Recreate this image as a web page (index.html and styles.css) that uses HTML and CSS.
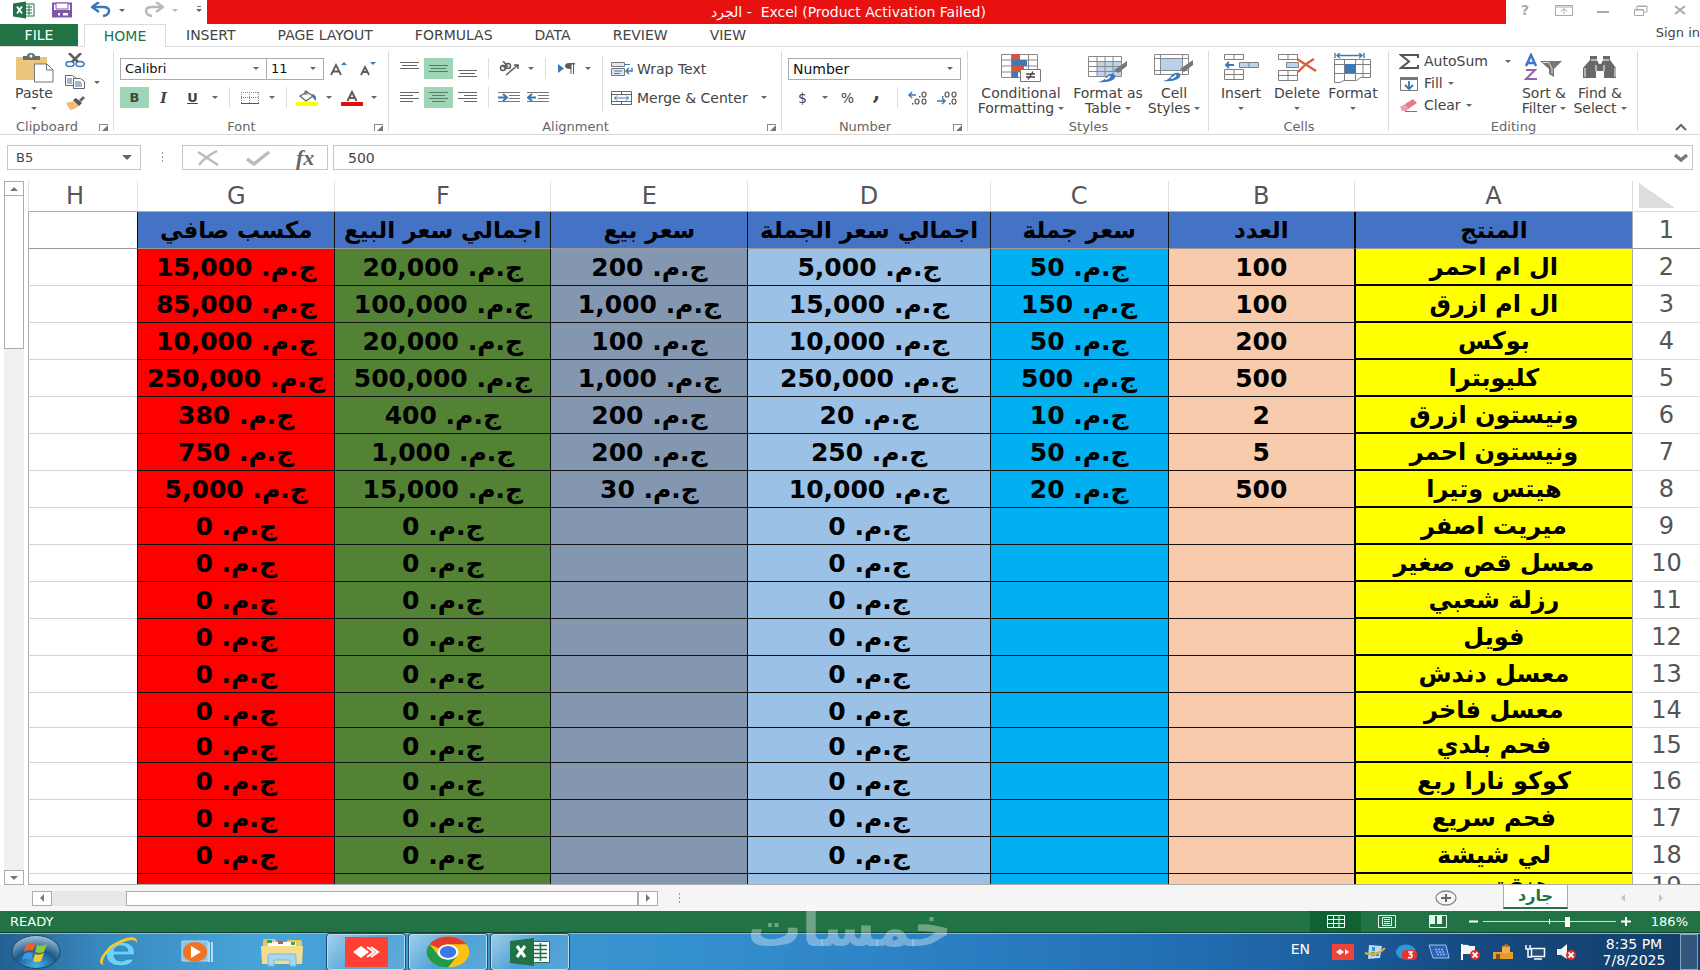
FILE: index.html
```
<!DOCTYPE html>
<html lang="en">
<head>
<meta charset="utf-8">
<title>الجرد - Excel</title>
<link rel="stylesheet" href="styles.css">
</head>
<body>
<header class="titlebar">
  <div class="quick">
    <svg class="qi" width="22" height="18" viewBox="0 0 22 18"><rect x="11" y="3" width="10" height="12" fill="#fff" stroke="#217346"/><path d="M13 6h6M13 9h6M13 12h6M16 4v10" stroke="#217346"/><path d="M0 2.500 13 .5v17L0 15.500z" fill="#217346"/><path d="m4 5.500 5 7M9 5.500l-5 7" stroke="#fff" stroke-width="2"/></svg>
    <button class="qb" aria-label="Save"><svg width="20" height="16" viewBox="0 0 20 16"><path d="M1 1.500h18v13H1z" fill="#fff" stroke="#7e57a8" stroke-width="2"/><path d="M4 1h12v6H4z" fill="#fff" stroke="#7e57a8"/><path d="M1 8h18v7h-3v-4H6v4H1z" fill="#7e57a8"/><path d="M8 11h3v3H8z" fill="#7e57a8"/></svg></button>
    <button class="qb undo" aria-label="Undo"><svg width="20" height="16" viewBox="0 0 20 16"><path d="M3 5h9q6 0 6 4t-6 5" fill="none" stroke="#3b78b8" stroke-width="2.500"/><path d="M8 0 1 5l7 5" fill="none" stroke="#3b78b8" stroke-width="2.500"/></svg></button>
    <button class="caret" aria-label="Undo list"></button>
    <button class="qb redo" aria-label="Redo"><svg width="20" height="16" viewBox="0 0 20 16"><path d="M17 5H8q-6 0-6 4t6 5" fill="none" stroke="#b9b9b9" stroke-width="2.500"/><path d="m12 0 7 5-7 5" fill="none" stroke="#b9b9b9" stroke-width="2.500"/></svg></button>
    <button class="caret faint" aria-label="Redo list"></button>
    <button class="caret bar" aria-label="Customize toolbar"></button>
  </div>
  <div class="title"><span>الجرد -&nbsp; Excel (Product Activation Failed)</span></div>
  <div class="winbtns">
    <button aria-label="Help" class="help">?</button>
    <button aria-label="Ribbon options"><svg width="18" height="11" viewBox="0 0 18 11"><path d="M.5.5h17v10H.5zM0 2h18M9 9V4M6 6.500l3-3 3 3" fill="none" stroke="#aaa"/></svg></button>
    <button aria-label="Minimize"><svg width="12" height="10" viewBox="0 0 12 10"><path d="M0 7h12" stroke="#aaa" stroke-width="2"/></svg></button>
    <button aria-label="Restore"><svg width="14" height="11" viewBox="0 0 14 11"><path d="M.5 4.500h9v6h-9zM3 4V1h10v6h-3M.5 5h9M3 1.500h10" fill="none" stroke="#aaa"/></svg></button>
    <button aria-label="Close"><svg width="12" height="10" viewBox="0 0 12 10"><path d="m1 1 10 8M11 1 1 9" stroke="#aaa" stroke-width="2"/></svg></button>
  </div>
</header>
<nav class="tabs">
  <button class="file">FILE</button>
  <button class="home">HOME</button>
  <button>INSERT</button>
  <button>PAGE LAYOUT</button>
  <button>FORMULAS</button>
  <button>DATA</button>
  <button>REVIEW</button>
  <button>VIEW</button>
  <a class="signin" href="#">Sign in</a>
</nav>
<section class="ribbon">
  <div class="group g-clip">
    <div class="body">
      <button class="big"><svg width="40" height="30" viewBox="0 0 40 30"><path d="M2 4h31v23H2z" fill="#ecc67e"/><path d="M9 7V3h4q0-3 4-3t4 3h5v4z" fill="#6b6b6b"/><circle cx="17" cy="3" r="1.500" fill="#fff"/><path d="M20.500 11H33l6 6v12H20.500z" fill="#fff" stroke="#777"/><path d="M32.500 11v6H39" fill="none" stroke="#777"/></svg><span>Paste</span><i class="car"></i></button>
      <div class="stack">
        <button aria-label="Cut"><svg width="20" height="15" viewBox="0 0 20 15"><path d="m4 0 9 9M16 0 7 9" stroke="#5c5c5c" stroke-width="2.500"/><ellipse cx="5" cy="11" rx="4" ry="2.500" fill="none" stroke="#3b78b8" stroke-width="1.500"/><ellipse cx="15" cy="11" rx="4" ry="2.500" fill="none" stroke="#3b78b8" stroke-width="1.500"/></svg></button>
        <button aria-label="Copy"><svg width="20" height="14" viewBox="0 0 20 14"><path d="M.5.500h7l3 2v8H.5z" fill="#fff" stroke="#666"/><path d="M2 4h5M2 6h5M2 8h5" stroke="#3b78b8"/><path d="M8.500 3.500h7l4 3v7h-11z" fill="#fff" stroke="#666"/><path d="M10 7h6M10 9h7M10 11h7" stroke="#3b78b8"/></svg></button>
        <button aria-label="Format painter"><svg width="20" height="14" viewBox="0 0 20 14"><path d="m1 7 8-2 5 5-5 3-4 1z" fill="#ecbc78"/><path d="m8 4 3-2 6 5-3 3z" fill="#555"/><path d="m14 4 4-4 2 2-4 4z" fill="#666"/></svg></button>
      </div>
      <button class="caret copyc" aria-label="Copy options"></button>
    </div>
    <div class="label has-launch"><span>Clipboard</span><i class="launch"></i></div>
  </div>
  <div class="group g-font">
    <div class="body rows">
      <div class="row">
        <label class="pick p-font"><select aria-label="Font"><option>Calibri</option></select></label>
        <label class="pick p-size"><select aria-label="Font size"><option>11</option></select></label>
        <button class="t" aria-label="Grow font"><svg width="18" height="14" viewBox="0 0 18 14"><path d="m1 13 5-10 5 10M3 9.500h6" fill="none" stroke="#5c5c5c" stroke-width="1.800"/><path d="m11 3 3-3 3 3z" fill="#3b78b8"/></svg></button>
        <button class="t" aria-label="Shrink font"><svg width="18" height="14" viewBox="0 0 18 14"><path d="m2 13 4-8 4 8M4 10h5" fill="none" stroke="#5c5c5c" stroke-width="1.800"/><path d="m11 0 3 3 3-3z" fill="#3b78b8"/></svg></button>
      </div>
      <div class="row">
        <button class="t on"><b>B</b></button><button class="t it">I</button><button class="t un">U</button><button class="caret" aria-label="Underline options"></button><i class="sep"></i>
        <button class="t" aria-label="Borders"><svg width="18" height="12" viewBox="0 0 18 12"><path d="M0 .5h18M0 5.500h18M.5 0v12M8.500 0v12M17.500 0v12" stroke="#888" stroke-dasharray="1 1"/><path d="M0 11.500h18" stroke="#555"/></svg></button><button class="caret" aria-label="Border options"></button><i class="sep"></i>
        <button class="t" aria-label="Fill color"><svg width="22" height="16" viewBox="0 0 22 16"><path d="M0 12h22v4H0z" fill="#ff0"/><path d="m4 6 7-4 6 4-7 5z" fill="#fff" stroke="#666" stroke-width="1.300"/><path d="M9 5V1h2v4" fill="none" stroke="#666"/><path d="M16 4q5 1 4 7l-3-3z" fill="#3b78b8"/></svg></button><button class="caret" aria-label="Fill options"></button>
        <button class="t" aria-label="Font color"><svg width="22" height="16" viewBox="0 0 22 16"><path d="M0 12h22v4H0z" fill="#e60f0f"/><path d="m6.500 11 4.500-9 4.500 9M8 8h6" fill="none" stroke="#5c5c5c" stroke-width="2"/></svg></button><button class="caret" aria-label="Font color options"></button>
      </div>
    </div>
    <div class="label has-launch"><span>Font</span><i class="launch"></i></div>
  </div>
  <div class="group g-align">
    <div class="body">
      <div class="rows a-left">
        <div class="row">
          <button class="t" aria-label="Top align"><svg width="19" height="16" viewBox="0 0 19 16"><path d="M0 1.500h19M2 4.500h15M0 7.500h19" stroke="#666"/></svg></button>
          <button class="t on" aria-label="Middle align"><svg width="19" height="16" viewBox="0 0 19 16"><path d="M0 4.500h19M2 7.500h15M0 10.500h19" stroke="#5b7a69"/></svg></button>
          <button class="t" aria-label="Bottom align"><svg width="19" height="16" viewBox="0 0 19 16"><path d="M0 9.500h19M2 12.500h15M0 15.500h19" stroke="#666"/></svg></button><i class="sep"></i>
          <button class="t" aria-label="Orientation"><svg width="22" height="16" viewBox="0 0 22 16"><g fill="none" stroke="#5c5c5c" stroke-width="1.500"><circle cx="5" cy="7" r="2.500"/><path d="m4 4 4 4"/><circle cx="10" cy="5" r="2.500"/><path d="m5 0 5 6M8 14 20 4M16 4h4v4"/></g></svg></button><button class="caret" aria-label="Orientation options"></button><i class="sep"></i>
          <button class="t" aria-label="Text direction"><svg width="18" height="12" viewBox="0 0 18 12"><path d="m1 1 6 4.500L1 10z" fill="#3b78b8"/><path d="M12 0h6v1.500h-1V11h-1V1.500h-1.500V11h-1V6Q8 6 8 3t4-3z" fill="#5c5c5c"/></svg></button><button class="caret" aria-label="Direction options"></button>
        </div>
        <div class="row">
          <button class="t" aria-label="Align left"><svg width="19" height="12" viewBox="0 0 19 12"><path d="M0 .5h19M0 3.500h13M0 6.500h19M0 9.500h13" stroke="#666"/></svg></button>
          <button class="t on" aria-label="Center"><svg width="19" height="12" viewBox="0 0 19 12"><path d="M0 .5h19M3 3.500h13M0 6.500h19M3 9.500h13" stroke="#5b7a69"/></svg></button>
          <button class="t" aria-label="Align right"><svg width="19" height="12" viewBox="0 0 19 12"><path d="M0 .5h19M6 3.500h13M0 6.500h19M6 9.500h13" stroke="#666"/></svg></button><i class="sep"></i>
          <button class="t" aria-label="Decrease indent"><svg width="22" height="12" viewBox="0 0 22 12"><path d="M0 .5h22M11 3.500h11M11 6.500h11M0 9.500h22" stroke="#777"/><path d="M0 5.500h8M5 2l4 3.500L5 9" fill="none" stroke="#3b78b8" stroke-width="2"/></svg></button>
          <button class="t" aria-label="Increase indent"><svg width="22" height="12" viewBox="0 0 22 12"><path d="M0 .5h22M11 3.500h11M11 6.500h11M0 9.500h22" stroke="#777"/><path d="M1 5.500h8M5 2 1 5.500 5 9" fill="none" stroke="#3b78b8" stroke-width="2"/></svg></button>
        </div>
      </div>
      <i class="sep tall"></i>
      <div class="rows">
        <button class="wide"><svg width="22" height="16" viewBox="0 0 22 16"><path d="M.5 1.500h13v4H.5zM.5 7.500h13v7H.5z" fill="#dfe7f0" stroke="#777"/><path d="M3 10h8M3 12.500h6M13 3.500h6" stroke="#3b78b8"/><path d="M21 7v3h-6M18 7l-3 3 3 3" fill="none" stroke="#3b78b8" stroke-width="1.500"/></svg>Wrap Text</button>
        <div class="row"><button class="wide"><svg width="22" height="16" viewBox="0 0 22 16"><path d="M.5 1.500h20v13H.5zM.5 4.500h20M.5 11.500h20M10.500 1v3M10.500 12v3" fill="none" stroke="#666"/><path d="M3 8h15M6 5.500 3.500 8 6 10.500M15 5.500 17.500 8 15 10.500" fill="none" stroke="#3b78b8"/></svg>Merge &amp; Center</button><button class="caret" aria-label="Merge options"></button></div>
      </div>
    </div>
    <div class="label has-launch"><span>Alignment</span><i class="launch"></i></div>
  </div>
  <div class="group g-num">
    <div class="body rows">
      <div class="row"><label class="pick p-num"><select aria-label="Number format"><option>Number</option></select></label></div>
      <div class="row">
        <button class="t sym">$</button><button class="caret" aria-label="Currency options"></button><button class="t sym">%</button><button class="t comma" aria-label="Comma style">,</button><i class="sep"></i>
        <button class="t dec" aria-label="Increase decimal"><svg width="20" height="14" viewBox="0 0 20 14"><path d="M1 4h7M4 1 1 4l3 3" fill="none" stroke="#3b78b8" stroke-width="1.500"/><g fill="none" stroke="#555" stroke-width="1.200"><ellipse cx="16" cy="3.500" rx="2" ry="2.500"/><ellipse cx="9" cy="10.500" rx="2" ry="2.500"/><ellipse cx="16" cy="10.500" rx="2" ry="2.500"/></g><path d="M11 5h1.500v1.500H11zM4 12h1.500v1.500H4z" fill="#555"/></svg></button>
        <button class="t dec" aria-label="Decrease decimal"><svg width="20" height="14" viewBox="0 0 20 14"><path d="M0 10h8M5 7l3 3-3 3" fill="none" stroke="#3b78b8" stroke-width="1.500"/><g fill="none" stroke="#555" stroke-width="1.200"><ellipse cx="10" cy="3.500" rx="2" ry="2.500"/><ellipse cx="17" cy="3.500" rx="2" ry="2.500"/><ellipse cx="17" cy="10.500" rx="2" ry="2.500"/></g><path d="M5 5h1.500v1.500H5zM12 12h1.500v1.500H12z" fill="#555"/></svg></button>
      </div>
    </div>
    <div class="label has-launch"><span>Number</span><i class="launch"></i></div>
  </div>
  <div class="group g-styles">
    <div class="body center">
      <button class="big b-cond"><svg width="40" height="30" viewBox="0 0 40 30"><path d="M.5 1.500h36v23H.5zM.5 7h36M.5 13h36M.5 19h36M10.500 1v24M27.500 1v24" fill="#fff" stroke="#888"/><path d="M11 1h8v6h-8zM11 13h12v6H11z" fill="#d0583c"/><path d="M11 7h15v6H11zM11 19h6v6h-6z" fill="#4178b5"/><path d="M19.500 16.500h20v12h-20z" fill="#fff" stroke="#777"/><path d="M25 21h9M25 24h9M32 18.500l-5 8" stroke="#444" stroke-width="1.400"/></svg><span>Conditional</span><span>Formatting<i class="car in"></i></span></button>
      <button class="big b-tab"><svg width="40" height="30" viewBox="0 0 40 30"><path d="M9 9h24v15H9z" fill="#bcd3ea"/><path d="M.5 3.500h33v20H.5zM.5 8.500h33M.5 13.500h33M.5 18.500h33M9 3v21M17 3v21M25 3v21" fill="none" stroke="#888"/><path d="m39 8v5l-9 7-4-3z" fill="#777"/><path d="M10 29q6-1 8-5 3-4 8-3 3 3-1 6-6 3-15 2z" fill="#4078b8"/><path d="M17 26q3 0 5-3" stroke="#fff" fill="none" stroke-width="1.500"/></svg><span>Format as</span><span>Table<i class="car in"></i></span></button>
      <button class="big b-cell"><svg width="40" height="30" viewBox="0 0 40 30"><path d="M.5 1.500h34v20H.5z" fill="#fff" stroke="#888"/><path d="M7 6h21v11H7z" fill="#b9d1ea"/><path d="M.5 5.500h34M.5 17.500h34M6.500 1v21M28.500 1v21" stroke="#888"/><path d="m39 7v5l-9 7-4-3z" fill="#777"/><path d="M9 28q6-1 8-5 3-4 8-3 3 3-1 6-6 3-15 2z" fill="#4078b8"/><path d="M17 25q3 0 5-3" stroke="#fff" fill="none" stroke-width="1.500"/></svg><span>Cell</span><span>Styles<i class="car in"></i></span></button>
    </div>
    <div class="label"><span>Styles</span></div>
  </div>
  <div class="group g-cells">
    <div class="body center">
      <button class="big b-c"><svg width="36" height="30" viewBox="0 0 36 30"><path d="M1.500 1.500h19v5h-19zM11 1v6M1.500 16.500h19v10h-19zM1.500 21.500h19M11 16v11" fill="none" stroke="#808080"/><path d="M16.500 9.500h19v5h-19z" fill="#b9d6ee" stroke="#808080"/><path d="M26 9v6" stroke="#808080"/><path d="M3 12h8M6 9l-3 3 3 3" fill="none" stroke="#3b78b8" stroke-width="1.800"/></svg><span>Insert</span><i class="car"></i></button>
      <button class="big b-c"><svg width="40" height="30" viewBox="0 0 40 30"><path d="M1.500 1.500h19v5h-19zM11 1v6M1.500 17.500h19v10h-19zM1.500 22.500h19M11 17v11" fill="none" stroke="#808080"/><path d="M9.500 9.500h12v5h-12z" fill="#b9d6ee" stroke="#808080"/><path d="M20 6q8 5 19 12M37 6q-9 5-16 13" fill="none" stroke="#d9603b" stroke-width="2.500"/></svg><span>Delete</span><i class="car"></i></button>
      <button class="big b-c"><svg width="38" height="30" viewBox="0 0 38 30"><path d="M1 0v5M30 0v5M3 2.500h25M6 0 3 2.500 6 5M25 0l3 2.500L25 5" fill="none" stroke="#3b78b8" stroke-width="1.400"/><path d="M.5 6.500h36v18h-10l-4 3H10l-4 2H.5zM.5 11.500h36M.5 20.500h36M10.500 7v20M21.500 7v20M29 7v17" fill="none" stroke="#808080"/><path d="M11 11h11v9H11z" fill="#3b78b8"/></svg><span>Format</span><i class="car"></i></button>
    </div>
    <div class="label"><span>Cells</span></div>
  </div>
  <div class="group g-edit">
    <div class="body">
      <div class="elist">
        <button><svg width="20" height="15" viewBox="0 0 20 15"><path d="M19 4V1H2l8 6.500L2 14h17v-3" fill="none" stroke="#555" stroke-width="2"/></svg>AutoSum<i class="car far"></i></button>
        <button><svg width="20" height="15" viewBox="0 0 20 15"><path d="M1.500 1.500h17v13h-17z" fill="#fff" stroke="#777"/><path d="M1 1h18v3H1z" fill="#777"/><path d="M10 5v8M6 9l4 4 4-4" fill="none" stroke="#3b78b8" stroke-width="1.800"/></svg>Fill<i class="car in"></i></button>
        <button><svg width="20" height="15" viewBox="0 0 20 15"><path d="m6 6 8-5 4 4-9 6z" fill="#e8798c"/><path d="m1 9 5-3 4 5-3 2H3z" fill="#eda0ad"/><path d="M6 13.500h12" stroke="#777"/></svg>Clear<i class="car in"></i></button>
      </div>
      <button class="big b-sort"><svg width="40" height="30" viewBox="0 0 40 30"><path d="m2 13 5-11 5 11M4 10h7" fill="none" stroke="#3f76c4" stroke-width="2.500"/><path d="M2 17h9L2 26h11" fill="none" stroke="#9a5fb5" stroke-width="2"/><path d="M16 8h22l-8 8v8l-5-3v-5z" fill="#777"/><path d="M19 9.500h6l3 6v5" fill="none" stroke="#ddd"/></svg><span>Sort &amp;</span><span>Filter<i class="car in"></i></span></button>
      <button class="big b-find"><svg width="36" height="30" viewBox="0 0 36 30"><path d="M8 3h7v4l2 4h2l2-4V3h7v4l6 8v10H22v-7h-8v7H1V15l7-8z" fill="#696969"/><path d="M3 15v9M33 15v9M14 12v6M22 12v6M9 7h6M21 7h6" stroke="#fff"/></svg><span>Find &amp;</span><span>Select<i class="car in"></i></span></button>
    </div>
    <div class="label"><span>Editing</span></div>
  </div>
  <button class="collapse" aria-label="Collapse ribbon"><svg width="14" height="8" viewBox="0 0 14 8"><path d="m2 7 5-5 5 5" fill="none" stroke="#666" stroke-width="2"/></svg></button>
</section>
<section class="fbar">
  <label class="pick namebox"><input aria-label="Name box" value="B5"></label>
  <i class="dots"></i>
  <div class="fxbox">
    <button aria-label="Cancel"><svg width="24" height="16" viewBox="0 0 24 16"><path d="m2 2 20 13M21 1Q9 7 3 15" fill="none" stroke="#bcbcbc" stroke-width="2.500"/></svg></button>
    <button aria-label="Enter"><svg width="26" height="16" viewBox="0 0 26 16"><path d="m2 9 7 5L24 2" fill="none" stroke="#bcbcbc" stroke-width="3.500"/></svg></button>
    <button class="fx">fx</button>
  </div>
  <div class="formula"><input aria-label="Formula" value="500"><svg width="16" height="10" viewBox="0 0 16 10"><path d="m2 2 6 5 6-5" fill="none" stroke="#777" stroke-width="3.500"/></svg></div>
</section>
<main class="work">
  <div class="vscroll"><button aria-label="Scroll up"><i class="up"></i></button><div class="vthumb"></div><div class="vtrack"></div><button aria-label="Scroll down"><i class="down"></i></button></div>
  <div class="view">
  <table class="sheet" dir="rtl">
    <colgroup><col class="c-n"><col class="c-a"><col class="c-b"><col class="c-c"><col class="c-d"><col class="c-e"><col class="c-f"><col class="c-e"><col class="c-h"></colgroup>
    <thead><tr><th class="corner"></th><th>A</th><th>B</th><th>C</th><th>D</th><th>E</th><th>F</th><th>G</th><th>H</th></tr></thead>
    <tbody>
      <tr class="heads"><th>1</th><td>المنتج</td><td>العدد</td><td>سعر جملة</td><td>اجمالي سعر الجملة</td><td>سعر بيع</td><td>اجمالي سعر البيع</td><td>مكسب صافي</td><td></td></tr>
      <tr><th>2</th><td>ال ام احمر</td><td>100</td><td>ج.م. 50</td><td>ج.م. 5,000</td><td>ج.م. 200</td><td>ج.م. 20,000</td><td>ج.م. 15,000</td><td></td></tr>
      <tr><th>3</th><td>ال ام ازرق</td><td>100</td><td>ج.م. 150</td><td>ج.م. 15,000</td><td>ج.م. 1,000</td><td>ج.م. 100,000</td><td>ج.م. 85,000</td><td></td></tr>
      <tr><th>4</th><td>بوكس</td><td>200</td><td>ج.م. 50</td><td>ج.م. 10,000</td><td>ج.م. 100</td><td>ج.م. 20,000</td><td>ج.م. 10,000</td><td></td></tr>
      <tr><th>5</th><td>كليوبترا</td><td>500</td><td>ج.م. 500</td><td>ج.م. 250,000</td><td>ج.م. 1,000</td><td>ج.م. 500,000</td><td>ج.م. 250,000</td><td></td></tr>
      <tr><th>6</th><td>ونيستون ازرق</td><td>2</td><td>ج.م. 10</td><td>ج.م. 20</td><td>ج.م. 200</td><td>ج.م. 400</td><td>ج.م. 380</td><td></td></tr>
      <tr><th>7</th><td>ونيستون احمر</td><td>5</td><td>ج.م. 50</td><td>ج.م. 250</td><td>ج.م. 200</td><td>ج.م. 1,000</td><td>ج.م. 750</td><td></td></tr>
      <tr><th>8</th><td>هيتس وتيرا</td><td>500</td><td>ج.م. 20</td><td>ج.م. 10,000</td><td>ج.م. 30</td><td>ج.م. 15,000</td><td>ج.م. 5,000</td><td></td></tr>
      <tr><th>9</th><td>ميريت اصفر</td><td></td><td></td><td>ج.م. 0</td><td></td><td>ج.م. 0</td><td>ج.م. 0</td><td></td></tr>
      <tr><th>10</th><td>معسل قص صغير</td><td></td><td></td><td>ج.م. 0</td><td></td><td>ج.م. 0</td><td>ج.م. 0</td><td></td></tr>
      <tr><th>11</th><td>رزلة شعبي</td><td></td><td></td><td>ج.م. 0</td><td></td><td>ج.م. 0</td><td>ج.م. 0</td><td></td></tr>
      <tr><th>12</th><td>فويل</td><td></td><td></td><td>ج.م. 0</td><td></td><td>ج.م. 0</td><td>ج.م. 0</td><td></td></tr>
      <tr><th>13</th><td>معسل دندش</td><td></td><td></td><td>ج.م. 0</td><td></td><td>ج.م. 0</td><td>ج.م. 0</td><td></td></tr>
      <tr class="short"><th>14</th><td>معسل فاخر</td><td></td><td></td><td>ج.م. 0</td><td></td><td>ج.م. 0</td><td>ج.م. 0</td><td></td></tr>
      <tr class="short"><th>15</th><td>فحم بلدي</td><td></td><td></td><td>ج.م. 0</td><td></td><td>ج.م. 0</td><td>ج.م. 0</td><td></td></tr>
      <tr><th>16</th><td>كوكو نارا ربع</td><td></td><td></td><td>ج.م. 0</td><td></td><td>ج.م. 0</td><td>ج.م. 0</td><td></td></tr>
      <tr><th>17</th><td>فحم سريع</td><td></td><td></td><td>ج.م. 0</td><td></td><td>ج.م. 0</td><td>ج.م. 0</td><td></td></tr>
      <tr><th>18</th><td>لي شيشة</td><td></td><td></td><td>ج.م. 0</td><td></td><td>ج.م. 0</td><td>ج.م. 0</td><td></td></tr>
      <tr class="part"><th>19</th><td>هنقة ست</td><td></td><td></td><td></td><td></td><td></td><td></td><td></td></tr>
    </tbody>
  </table>
  </div>
</main>
<section class="sheetbar">
  <button class="hb" aria-label="Scroll left"><i class="left"></i></button><div class="htrack"></div><div class="hthumb"></div><button class="hb" aria-label="Scroll right"><i class="right"></i></button>
  <i class="dots sm"></i>
  <button class="add" aria-label="New sheet"><svg width="22" height="16" viewBox="0 0 22 16"><ellipse cx="11" cy="8" rx="10" ry="7" fill="none" stroke="#888" stroke-width="1.300"/><path d="M6 8h10M11 4v8" stroke="#666" stroke-width="2"/></svg></button>
  <button class="stab">جارد</button>
  <button class="nav n1" aria-label="Previous sheet"><i class="left"></i></button><button class="nav" aria-label="Next sheet"><i class="right"></i></button>
</section>
<footer class="status">
  <span class="ready">READY</span>
  <button class="v act" aria-label="Normal view"><svg width="18" height="13" viewBox="0 0 18 13"><path d="M.5.500h17v12H.5zM.5 4.500h17M.5 8.500h17M6.500 0v13M12 0v13" fill="none" stroke="#fff"/></svg></button>
  <button class="v" aria-label="Page layout view"><svg width="18" height="13" viewBox="0 0 18 13"><path d="M.5.500h17v12H.5zM4.500 2.500h9v8h-9zM6 4.500h6M6 6.500h6M6 8.500h6" fill="none" stroke="#e8f2ec"/></svg></button>
  <button class="v" aria-label="Page break view"><svg width="18" height="13" viewBox="0 0 18 13"><path d="M.5.500h17v12H.5z" fill="none" stroke="#e8f2ec"/><path d="M1 1h5v8H1zM8 1h5v8H8z" fill="#e8f2ec"/></svg></button>
  <button class="z" aria-label="Zoom out"><svg width="9" height="9" viewBox="0 0 9 9"><path d="M0 4.500h9" stroke="#fff" stroke-width="2"/></svg></button>
  <input type="range" min="0" max="100" value="64" aria-label="Zoom">
  <button class="z" aria-label="Zoom in"><svg width="10" height="9" viewBox="0 0 10 9"><path d="M0 4.500h10M5 0v9" stroke="#fff" stroke-width="2"/></svg></button>
  <span class="pct">186%</span>
</footer>
<footer class="taskbar">
  <button class="tb orb" aria-label="Start"><svg width="50" height="36" viewBox="0 0 50 36"><defs><radialGradient id="orb" cx=".5" cy=".9" r=".9"><stop offset="0" stop-color="#3fb4e8"/><stop offset=".5" stop-color="#1c5a8c"/><stop offset="1" stop-color="#a9c3d6"/></radialGradient></defs><ellipse cx="25" cy="18" rx="24" ry="16.500" fill="url(#orb)" stroke="#1d4668"/><path d="M15 11q5-3 9-1l-2 7q-4-2-9 1z" fill="#e8622b"/><path d="M26 11q4 2 10-1l-3 8q-5 2-9 0z" fill="#8dc63f"/><path d="M13 20q4-3 9-1l-2 7q-4-3-9 0z" fill="#3c9be0"/><path d="M24 20q4 2 9-1l-3 8q-4 2-8 0z" fill="#fdc72f"/></svg></button>
  <button class="tb" aria-label="Internet Explorer"><svg width="42" height="32" viewBox="0 0 42 32"><path d="M8 17Q9 6 23 6t14 13H16q1 6 7 6 4 0 6-2h7q-3 7-13 7Q8 30 8 17zM16 15h14q-1-5-7-5t-7 5z" fill="#6fd0f6" stroke="#2287c0" fill-rule="evenodd"/><path d="M6 29Q-2 28 6 17 14 6 28 2q12-3 11 5-2-5-10-2Q14 9 7 20q-4 7-1 9z" fill="#f6c928"/></svg></button>
  <button class="tb" aria-label="Media Player"><svg width="36" height="26" viewBox="0 0 36 26"><path d="M1 2h26v20H1z" fill="#8fc0e2" stroke="#b5daf0"/><path d="M28 3v20M31 3v20" stroke="#b5daf0" stroke-width="2"/><ellipse cx="14" cy="13" rx="12" ry="10" fill="#ee7420"/><path d="m10 7 10 6-10 6z" fill="#fff"/></svg></button>
  <button class="tb" aria-label="Explorer"><svg width="44" height="30" viewBox="0 0 44 30"><path d="M3 4q0-2 2-2h10l2 3h9l2-2h12q2 0 2 2v20H3z" fill="#e9c766"/><path d="M8 5h28v6H8z" fill="#fff"/><path d="M7 3h5v3H7zM31 5h4v3h-4z" fill="#3aa655"/><path d="M18 4h5v3h-5z" fill="#d9503a"/><path d="M1 9h42l-1 18H2z" fill="#f6dd8d"/><path d="M8 29V19q0-2 2-2h24q2 0 2 2v10h-6v-6H14v6z" fill="#a8d8f0" stroke="#78b5dc"/></svg></button>
  <button class="tb run" aria-label="AnyDesk"><svg width="43" height="30" viewBox="0 0 43 30"><path d="M0 0h43v30H0z" fill="#ff4035"/><path d="m8 15 8-6 8 6-8 6z" fill="#fff"/><path d="m22 10 7 5-7 5M26 10l7 5-7 5" fill="none" stroke="#fff" stroke-width="2"/></svg></button>
  <button class="tb run" aria-label="Chrome"><svg width="44" height="32" viewBox="0 0 32 32" preserveAspectRatio="none"><circle cx="16" cy="16" r="15.500" fill="#fbc116"/><path d="M2.600 8.200A15.500 15.500 0 0 1 29.400 8.200H16a7.800 7.800 0 0 0-6.800 4z" fill="#e33b2e"/><path d="M2.600 8.200A15.500 15.500 0 0 0 16 31.500l6.700-11.600a7.800 7.800 0 0 1-13.400 0z" fill="#229a4b"/><circle cx="16" cy="16" r="7.600" fill="#fff"/><circle cx="16" cy="16" r="6" fill="#3b78e7"/></svg></button>
  <button class="tb run" aria-label="Excel"><svg width="42" height="28" viewBox="0 0 42 28"><path d="M22.500 3.500h18v21h-18z" fill="#fff" stroke="#217346"/><path d="M25 7.500h13M25 11.500h13M25 15.500h13M25 19.500h13M31.500 5v18" stroke="#217346" stroke-width="1.500"/><path d="M1 3 25 0v28L1 25z" fill="#217346"/><path d="m8 8 8 11M16 8 8 19" stroke="#fff" stroke-width="3"/></svg></button>
  <div class="tray">
    <span class="lang">EN</span>
    <svg width="22" height="16" viewBox="0 0 22 16"><path d="M0 0h22v16H0z" fill="#f04438"/><path d="m4 8 4-3 4 3-4 3zM13 5l4 3-4 3" fill="#fff"/></svg>
    <svg width="22" height="16" viewBox="0 0 22 16"><path d="m5 1 13 1-2 12-12 1z" fill="#b8dcf4"/><path d="m8 3 3 0v4H8zM12 8h3v4h-3z" fill="#3f8fd0"/><path d="M7 8h4v4H7z" fill="#69b34c"/><path d="M1 9Q12 13 21 4" fill="none" stroke="#e8a93a" stroke-width="2"/></svg>
    <svg width="22" height="16" viewBox="0 0 22 16"><ellipse cx="10" cy="8" rx="10" ry="7.500" fill="#2d9ad8"/><rect x="6" y="6" width="15" height="10" rx="4" fill="#e5322e"/><path d="M12 8h4l-2 2.500q3 0 2 2t-4 1" fill="none" stroke="#fff" stroke-width="1.500"/></svg>
    <svg width="22" height="16" viewBox="0 0 22 16"><path d="M1 1h17l3 13H5z" fill="#2b63b8" stroke="#9cc3ea"/><path d="M7 5.500h8M8 8h8M9 10.500h8" stroke="#8ab6e4" stroke-width="1.300" stroke-dasharray="2 1"/></svg>
    <svg width="22" height="16" viewBox="0 0 22 16"><path d="M2 0v16" stroke="#fff" stroke-width="2"/><path d="M3 1q4-1 7 1h5v8H3z" fill="#f4f4f4"/><circle cx="15" cy="11" r="5" fill="#dd2e2e"/><path d="m12.500 8.500 5 5M17.500 8.500l-5 5" stroke="#fff" stroke-width="1.800"/></svg>
    <svg width="22" height="16" viewBox="0 0 22 16"><path d="M1 8h20v7H1z" fill="#e59a2e"/><path d="M10 2h8v7h-8z" fill="#f0b14a"/><path d="m9 3 5-3 5 3z" fill="#c9751b"/><path d="M4 10h4v5H4z" fill="#8a4d12"/></svg>
    <svg width="22" height="16" viewBox="0 0 22 16"><path d="M7.500 4.500h13v8h-13z" fill="#23507e" stroke="#fff" stroke-width="1.500"/><path d="M10 15h8M2 1v4h4V1M4 5v8h4" fill="none" stroke="#fff" stroke-width="1.500"/></svg>
    <svg width="22" height="16" viewBox="0 0 22 16"><path d="M1 5h4l6-5v15l-6-4H1z" fill="#f4f4f4"/><circle cx="15" cy="11" r="5" fill="#dd2e2e"/><path d="m12.500 8.500 5 5M17.500 8.500l-5 5" stroke="#fff" stroke-width="1.800"/></svg>
    <div class="clock"><span>8:35 PM</span><span>7/8/2025</span></div>
    <button class="peek" aria-label="Show desktop"></button>
  </div>
</footer>
<div class="mark" dir="rtl">خمسات</div>
</body>
</html>
```

FILE: styles.css
```
* { box-sizing: border-box; }
body { margin: 0; height: 100vh; display: flex; flex-direction: column; overflow: hidden; background: #fff; color: #444; font: 14px/16px "DejaVu Sans", sans-serif; position: relative; }
button, input, select { font: inherit; color: inherit; background: none; border: 0; padding: 0; margin: 0; border-radius: 0; outline: 0; }
button { display: flex; align-items: center; justify-content: center; white-space: nowrap; }
svg { display: block; flex: none; }
i { font-style: normal; flex: none; }

.titlebar { display: flex; height: 24px; flex: none; }
.quick { display: flex; align-items: center; width: 207px; flex: none; padding: 0 0 4px 13px; }
.qi { margin-right: 12px; }
.qb { width: 30px; flex: none; }
.undo { margin-left: 9px; }
.redo { margin-left: 11px; }
.quick .caret { width: 12px; }
.quick .bar { margin-left: 12px; }
.title { flex: 1; background: #e91010; color: #fff; text-align: center; padding-right: 16px; line-height: 24px; }
.winbtns { display: flex; width: 194px; flex: none; justify-content: space-between; padding: 0 10px 4px 9px; }
.winbtns button { width: 20px; }
.help { font-weight: bold; color: #aaa; }

.caret { width: 16px; height: 21px; flex: none; }
.caret::before, .car, .pick::after { content: ""; width: 0; height: 0; border: 3px solid transparent; border-top-color: #666; border-bottom-width: 0; display: block; }
.faint::before { border-top-color: #bbb; }
.bar::before { box-shadow: 0 -4px 0 -1px #777; }

.tabs { display: flex; height: 23px; flex: none; border-bottom: 1px solid #dcdcdc; align-items: stretch; }
.tabs button { margin-right: 42px; }
.tabs .file { width: 78px; background: #217346; color: #fff; margin-right: 6px; }
.tabs .home { width: 82px; color: #217346; border: 1px solid #dcdcdc; border-bottom: 0; background: #fff; margin: 0 20px 0 0; height: 23px; }
.signin { margin-left: auto; color: #444; text-decoration: none; font-size: 13px; line-height: 18px; }

.ribbon { display: flex; height: 88px; flex: none; border-bottom: 1px solid #d8d8d8; padding-top: 4px; }
.group { display: flex; flex-direction: column; flex: none; background: linear-gradient(#dcdcdc, #dcdcdc) 100% 0 / 1px 80px no-repeat; }
.g-clip { width: 114px; } .g-font { width: 275px; } .g-align { width: 393px; } .g-num { width: 186px; } .g-styles { width: 241px; } .g-cells { width: 180px; } .g-edit { width: 249px; }
.body { height: 68px; flex: none; display: flex; padding: 2px 6px 0; align-items: flex-start; }
.rows { display: flex; flex-direction: column; gap: 8px; padding-top: 7px; }
.body .rows { padding-top: 5px; }
.row { display: flex; height: 21px; align-items: center; }
.label { height: 15px; line-height: 15px; display: flex; justify-content: center; position: relative; color: #666; font-size: 13px; }
.has-launch { padding-right: 20px; }
.launch { position: absolute; right: 6px; top: 5px; width: 9px; height: 7px; border-left: 1px solid #888; border-top: 1px solid #888; }
.launch::after { content: ""; position: absolute; right: 0; bottom: 0; border: 3px solid transparent; border-right-color: #777; border-bottom-color: #777; }
.t { width: 29px; height: 21px; flex: none; }
.on { background: #9fd5b7; }
.t b { font-size: 13px; }
.it { font: italic bold 14px "DejaVu Serif", serif; }
.un { font-weight: bold; font-size: 13px; text-decoration: underline; }
.comma { font: bold 22px/10px "DejaVu Serif", serif; padding-bottom: 12px; }
.sep { width: 12px; height: 21px; background: linear-gradient(#dcdcdc, #dcdcdc) 50% 0 / 1px 100% no-repeat; }
.tall { height: 55px; margin-top: 3px; }
.pick { display: flex; align-items: center; border: 1px solid #ababab; height: 22px; color: #111; padding: 0 7px 0 4px; background: #fff; }
.pick select, .pick input { flex: 1; min-width: 0; width: 100%; appearance: none; height: 18px; }
.p-font { width: 147px; font-size: 13px; } .p-size { width: 58px; margin-left: -1px; font-size: 13px; } .p-num { width: 173px; }
.a-left { width: 201px; }
.wide { gap: 4px; height: 21px; padding-left: 3px; justify-content: flex-start; }
.wide + .caret { margin-left: 8px; }
.big { flex-direction: column; justify-content: flex-start; flex: none; line-height: 15px; }
.big svg { margin-bottom: 3px; }
.big span { display: flex; align-items: center; }
.big > .car { margin-top: 6px; }
.car.in { margin-left: 4px; }
.car.far { margin-left: 12px; }
.g-clip .big { width: 56px; }
.stack { display: flex; flex-direction: column; gap: 7px; padding-left: 3px; }
.copyc { margin-top: 19px; margin-left: 4px; }
.center { padding-left: 4px; }
.g-clip .body { padding-right: 0; }
.b-cond { width: 98px; } .b-tab { width: 76px; } .b-cell { width: 56px; }
.b-c { width: 56px; }
.elist { display: flex; flex-direction: column; gap: 6px; width: 120px; padding-left: 4px; }
.elist button { gap: 5px; justify-content: flex-start; }
.elist .in { margin-left: 0; }
.b-sort { width: 58px; } .b-find { width: 54px; }
.collapse { margin: auto 12px 3px auto; width: 14px; }

.fbar { display: flex; height: 46px; flex: none; padding: 10px 7px 11px; font-size: 13px; }
.namebox { width: 134px; height: 25px; padding: 0 8px; border-color: #c6c6c6; color: #444; }
.namebox::after { border-width: 5px 5px 0; }
.dots { width: 3px; height: 12px; margin: 6px 18px 0 20px; background: radial-gradient(circle, #999 1px, transparent 1px) 0 0 / 3px 4px; }
.fxbox { display: flex; width: 146px; height: 25px; border: 1px solid #c6c6c6; justify-content: space-around; margin-right: 5px; }
.fx { font: italic bold 22px/20px "Liberation Serif", serif; color: #666; }
.formula { flex: 1; display: flex; align-items: center; border: 1px solid #c6c6c6; height: 25px; padding: 0 3px 0 14px; }
.formula input { flex: 1; font-size: 14px; }

.work { flex: 1; min-height: 0; display: flex; }
.vscroll { width: 20px; margin: 0 4px 0 4px; display: flex; flex-direction: column; flex: none; background: #f1f1f1; }
.vscroll button { height: 15px; border: 1px solid #ababab; background: #fff; }
.vthumb { height: 153px; border: 1px solid #ababab; background: #fff; border-top: 0; }
.vtrack { flex: 1; }
.up, .down, .left, .right { width: 0; height: 0; border: 4px solid transparent; }
.up { border-bottom-color: #777; border-top: 0; } .down { border-top-color: #777; border-bottom: 0; }
.left { border-right-color: #777; border-left: 0; } .right { border-left-color: #777; border-right: 0; }
.view { flex: 1; min-width: 0; overflow: hidden; border-bottom: 1px solid #ababab; }
.sheet { width: 100%; table-layout: fixed; border-collapse: separate; border-spacing: 0; color: #000; }
.c-n { width: 68px; } .c-a { width: 278px; } .c-b { width: 186px; } .c-c { width: 178px; } .c-d { width: 242px; } .c-e { width: 197px; } .c-f { width: 216px; } .c-h { width: 109px; }
th { font-weight: normal; font-size: 24px; color: #555; padding: 0; text-align: center; }
thead th { height: 31px; line-height: 30px; border-left: 1px solid #e0e0e0; border-bottom: 1px solid #ababab; }
thead th:last-child { padding-right: 0; padding-right: 16px; }
.sheet .corner { background: linear-gradient(to top right, #ddd 50%, transparent 50%) 6px 2px / 36px 25px no-repeat; border-bottom-color: #ddd; }
tbody tr { height: 37px; }
tbody td { padding: 2px 0 0; text-align: center; font-weight: bold; font-size: 25px; line-height: 34px; white-space: nowrap; border-left: 1px solid #111; border-bottom: 1px solid #111; overflow: hidden; }
tbody th { line-height: 36px; border-left: 1px solid #ababab; border-bottom: 1px solid #ddd; }
td:nth-child(2) { background: #ff0; border-left: 2px solid #000; border-bottom: 2px solid #000; font-size: 24px; line-height: 33px; }
td:nth-child(3) { background: #f8cbad; }
td:nth-child(4) { background: #00b0f0; }
td:nth-child(5) { background: #9bc2e6; }
td:nth-child(6) { background: #8497b0; }
td:nth-child(7) { background: #548235; }
td:nth-child(8) { background: #f00; }
td:nth-child(9) { background: #fff; border-left-color: #ababab; border-bottom-color: #d4d4d4; }
tbody .short { height: 35px; }
.short th { line-height: 33px; }
.short td, .short td:nth-child(2) { line-height: 31px; }
.part th, .part td, .part td:nth-child(2) { line-height: 24px; padding: 0; vertical-align: top; }
.heads td, .heads td:nth-child(2) { background: #4472c4; border-bottom: 1px solid #999; font-size: 23px; }
.heads td { padding: 0; }
.heads td:nth-child(9) { background: #fff; }
.heads th { border-bottom-color: #999; }

.sheetbar { display: flex; height: 26px; flex: none; background: #f5f5f5; padding-left: 32px; align-items: center; }
.hb { width: 20px; height: 15px; border: 1px solid #ababab; background: #fff; }
.htrack { width: 74px; height: 15px; background: #e8e8e8; }
.hthumb { width: 512px; height: 15px; border: 1px solid #ababab; background: #fff; }
.sm { margin: 0 auto 0 20px; }
.add { margin-right: 46px; }
.stab { width: 65px; height: 24px; align-self: flex-start; background: #fff; border: 1px solid #ababab; border-top: 0; border-bottom: 2px solid #217346; color: #217346; font-size: 16px; font-weight: bold; }
.nav { width: 38px; margin-right: 20px; }
.nav i { opacity: .4; }
.n1 { margin: 0 0 0 36px; }

.status { display: flex; align-items: center; height: 22px; flex: none; background: #217346; color: #fff; font-size: 13px; padding: 0 12px 0 10px; border-bottom: 1px solid #12422a; }
.ready { margin-right: auto; }
.v { width: 51px; height: 21px; }
.act { background: #0f6332; }
.z { width: 20px; }
.status input { appearance: none; width: 133px; height: 10px; background: linear-gradient(#fff, #fff) 50% 50% / 1px 5px no-repeat, linear-gradient(#cfe2d7, #cfe2d7) 0 50% / 100% 1px no-repeat; }
.status input::-webkit-slider-thumb { appearance: none; width: 5px; height: 10px; background: #fff; }
.pct { width: 52px; text-align: right; }

.taskbar { display: flex; height: 37px; flex: none; border-top: 1px solid #8db8d8; background: linear-gradient(90deg, #235f92 0, #3989bf 6%, #48a4d8 15%, #3f9bd3 25%, #3590ce 40%, #2b80c4 55%, #2470b6 68%, #1d61a2 77%, #164b82 86%, #133d68 100%); }
.tb { width: 83px; height: 36px; flex: none; }
.orb { width: 72px; }
.orb + .tb { width: 93px; }
.orb + .tb + .tb { width: 68px; margin-right: 7px; }
.run { width: 78px; margin-left: 4px; border: 1px solid #b9dcf0; border-radius: 3px; background: linear-gradient(135deg, #ffffff80, #ffffff18 50%, #ffffff28); box-shadow: 0 0 0 1px #1b4d78; }
.tray { margin-left: auto; display: flex; align-items: center; color: #fff; gap: 10px; }
.lang { margin: 0 12px 6px 0; }
.clock { display: flex; flex-direction: column; align-items: center; width: 92px; line-height: 16px; }
.peek { width: 18px; height: 36px; border: 1px solid #8aa5bf; background: #ffffff22; margin: 0 2px 0 -10px; }

.mark { position: absolute; left: 44%; width: 12%; bottom: 14px; text-align: center; font: bold 54px/56px "DejaVu Sans", sans-serif; color: #ffffff59; pointer-events: none; }
```
